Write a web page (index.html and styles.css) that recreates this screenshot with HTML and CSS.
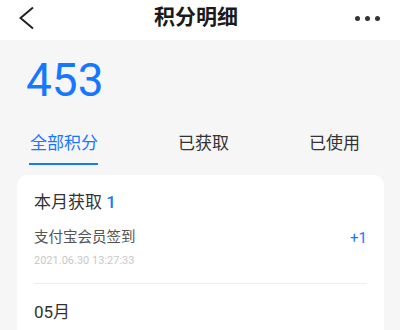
FILE: index.html
```html
<!DOCTYPE html>
<html lang="zh-CN">
<head>
    <meta charset="UTF-8">
    <meta name="viewport" content="width=device-width, initial-scale=1.0">
    <title>积分明细</title>
    <link rel="stylesheet" href="styles.css">
</head>
<body>
    <div class="header">
        <svg class="back-icon" width="16" height="24" viewBox="0 0 16 24">
            <polyline points="14,1.5 1.5,12 14,22.5" fill="none" stroke="#222" stroke-width="2"/>
        </svg>
        <h1 class="title">积分明细</h1>
        <div class="more">
            <span class="dot"></span>
            <span class="dot"></span>
            <span class="dot"></span>
        </div>
    </div>

    <div class="points">453</div>

    <div class="tabs">
        <div class="tab active">全部积分</div>
        <div class="tab">已获取</div>
        <div class="tab">已使用</div>
    </div>

    <div class="card">
        <div class="month-title">本月获取 <span class="blue">1</span></div>
        <div class="record">
            <div class="record-info">
                <div class="record-name">支付宝会员签到</div>
                <div class="record-time">2021.06.30 13:27:33</div>
            </div>
            <div class="record-value">+1</div>
        </div>
        <div class="month-title month-next">05月</div>
    </div>
</body>
</html>
```

FILE: styles.css
```css
/* Basic reset */
* {
    margin: 0;
    padding: 0;
    box-sizing: border-box;
}

body {
    background-color: #f6f6f6;
    font-family: Roboto, "Noto Sans CJK SC", sans-serif;
    color: #333;
    overflow: hidden;
}

/* Top bar */
.header {
    height: 40px;
    background-color: #fff;
    display: flex;
    align-items: center;
    justify-content: space-between;
    padding: 0 20px 6px 19px;
}

.back-icon {
    display: block;
    margin-top: 2px;
}

.title {
    font-size: 21px;
    font-weight: bold;
    color: #1a1a1a;
    line-height: 28px;
    margin-left: 2px;
}

.more {
    display: flex;
    gap: 5px;
    padding-top: 2px;
}

.dot {
    width: 5px;
    height: 5px;
    border-radius: 50%;
    background-color: #333;
}

/* Points total */
.points {
    font-size: 46px;
    line-height: 46px;
    color: #1677ff;
    padding: 17px 0 0 26px;
}

/* Tabs */
.tabs {
    display: flex;
    justify-content: space-between;
    padding: 27px 40px 0 29px;
}

.tab {
    font-size: 17px;
    line-height: 26px;
    color: #333;
    padding-bottom: 7px;
    border-bottom: 2px solid transparent;
}

.tab.active {
    color: #1677ff;
    border-bottom-color: #1677ff;
    padding-left: 1px;
}

/* Record card */
.card {
    margin: 10px 16px 0 17px;
    background-color: #fff;
    border-radius: 10px;
    padding: 15px 17px 20px 17px;
}

.month-title {
    font-size: 17px;
    line-height: 24px;
    color: #333;
}

.blue {
    color: #1677ff;
    font-weight: 500;
}

.record {
    display: flex;
    justify-content: space-between;
    padding: 14px 0 15px 0;
    border-bottom: 1px solid #eee;
}

.record-name {
    font-size: 14.5px;
    line-height: 20px;
    color: #555;
}

.record-time {
    font-size: 11px;
    line-height: 14px;
    color: #c8c8c8;
    margin-top: 6px;
}

.record-value {
    font-size: 15px;
    line-height: 20px;
    color: #1677ff;
}

.month-next {
    margin-top: 16px;
}
```
